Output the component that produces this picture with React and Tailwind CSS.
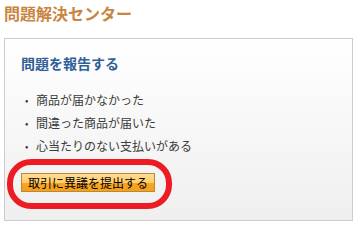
const items = ['商品が届かなかった', '間違った商品が届いた', '心当たりのない支払いがある'];

const App = () => {
  return (
    <div className="relative w-[359px] h-[228px] bg-white overflow-hidden font-['Noto_Sans_CJK_JP',sans-serif]">
      <h1 className="h-[26px] pl-[4px] text-[16px] leading-[26px] font-bold text-[#c9843f]">
        問題解決センター
      </h1>

      <div className="mt-[12px] ml-[4px] w-[349px] h-[183px] border border-[#cccccc] bg-gradient-to-b from-white to-[#efefef] pl-[16px]">
        <h2 className="pt-[14px] text-[14px] leading-[20px] font-bold text-[#2f5f98]">
          問題を報告する
        </h2>

        <ul className="mt-[15px] text-[12px] leading-[23px] text-[#3a3a3a]">
          {items.map((item) => (
            <li key={item} className="flex items-center">
              <span className="w-[15px] pl-[4px] text-[10px]">•</span>
              {item}
            </li>
          ))}
        </ul>

        <button
          type="button"
          className="mt-[16px] w-[134px] h-[19px] border border-[#b98a35] bg-[linear-gradient(to_bottom,#ffdb92_0%,#ffcd6e_50%,#f8a526_55%,#f5a01c_100%)] text-[12px] leading-[17px] text-black"
        >
          取引に異議を提出する
        </button>
      </div>

      {/* red marker circle over the button */}
      <div className="absolute left-[7px] top-[159px] w-[165px] h-[50px] rounded-[24px] border-[6px] border-[#ed1c24]" />
    </div>
  );
};

export default App;
